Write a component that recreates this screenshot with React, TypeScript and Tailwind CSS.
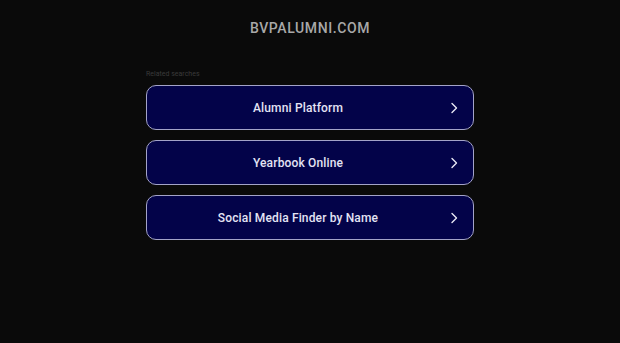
const items = ["Alumni Platform", "Yearbook Online", "Social Media Finder by Name"];

export default function App() {
  return (
    <div
      className="min-h-[343px] w-full bg-[#0a0a0a] flex flex-col items-center"
      style={{ fontFamily: "Roboto, Arial, 'Liberation Sans', sans-serif" }}
    >
      <h1 className="mt-[20px] text-[14px] leading-[17px] font-medium tracking-[0.6px] text-[#a8a8a8]">
        BVPALUMNI.COM
      </h1>

      <div className="mt-[33px] w-[328px] flex flex-col">
        <p className="text-[7px] leading-[9px] text-[#3a3a3a] mb-[6px]">Related searches</p>
        <div className="flex flex-col gap-[10px]">
          {items.map((t) => (
            <a
              key={t}
              href="#"
              className="relative flex items-center justify-center h-[45px] pr-[24px] rounded-[10px] border border-[#a3a3c8] bg-[#030349] text-[#e4e4f4] text-[12px] font-medium tracking-[0.15px]"
            >
              {t}
              <svg
                className="absolute right-[14px] top-1/2 -translate-y-1/2"
                width="10"
                height="12"
                viewBox="0 0 10 12"
                fill="none"
                stroke="#e8e8f4"
                strokeWidth="1.4"
                strokeLinecap="round"
                strokeLinejoin="round"
              >
                <path d="M3 1.5 L7.5 6 L3 10.5" />
              </svg>
            </a>
          ))}
        </div>
      </div>
    </div>
  );
}
